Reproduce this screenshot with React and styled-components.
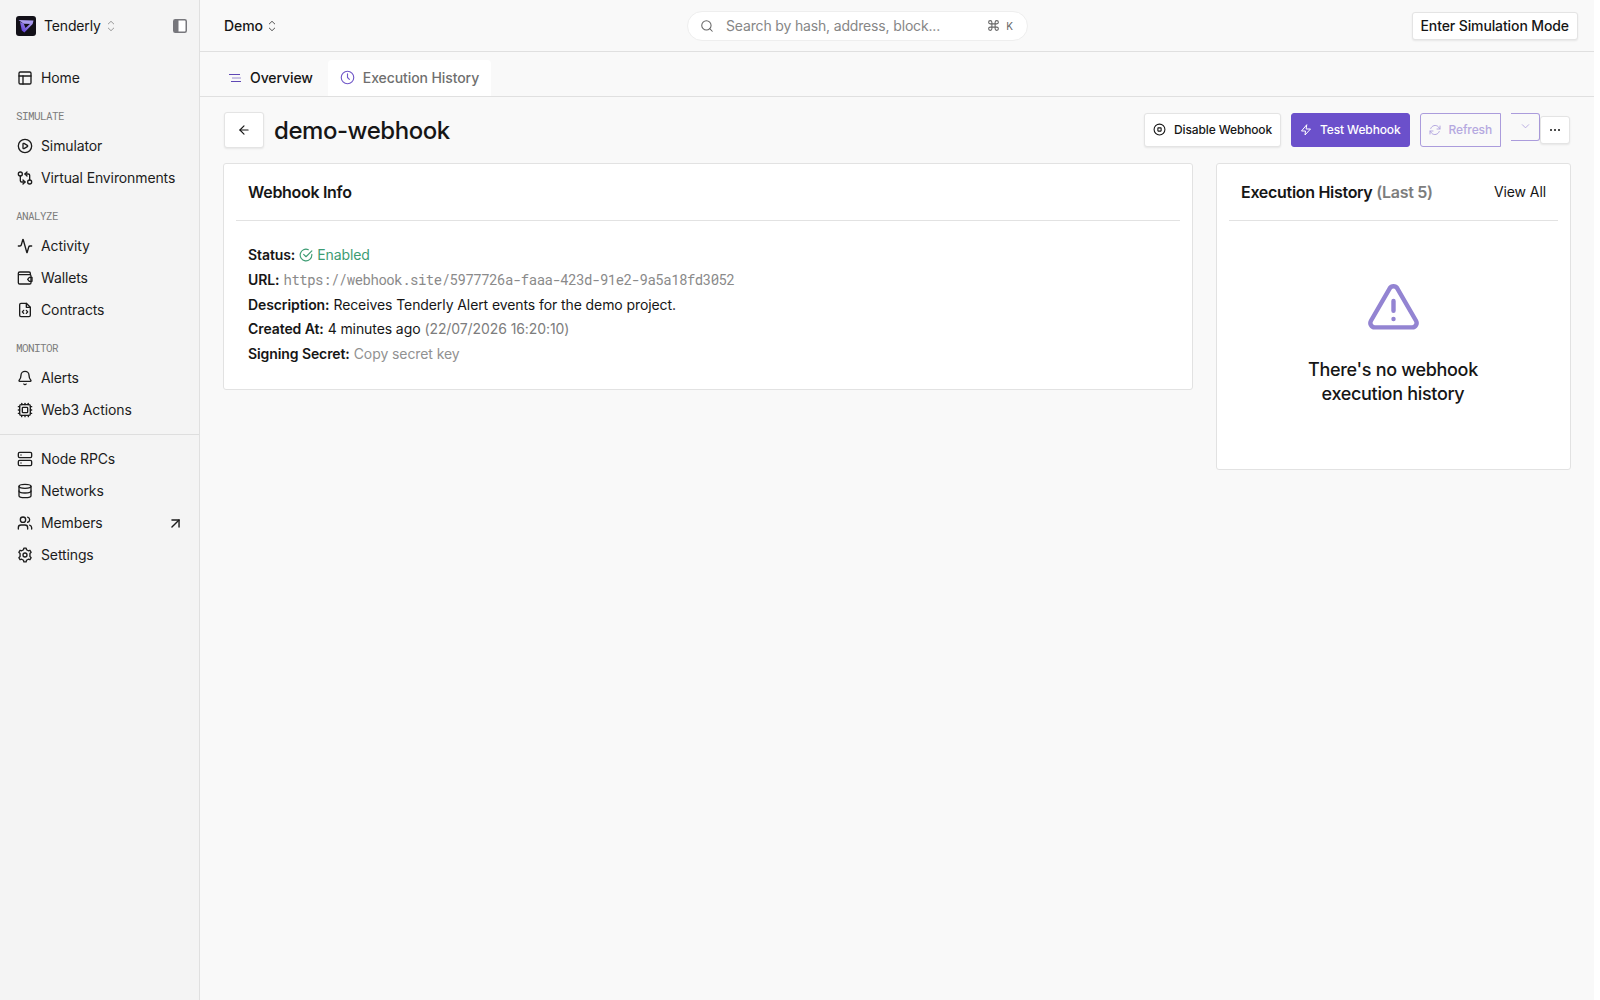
import React from "react";
import styled, { createGlobalStyle, css } from "styled-components";
import {
  Activity,
  ArrowLeft,
  ArrowUpRight,
  Bell,
  CirclePlay,
  Command,
  Cpu,
  Database,
  GitCompareArrows,
  PanelsTopLeft,
  Search,
  Server,
  Users,
} from "lucide-react";

const GlobalStyle = createGlobalStyle`
  * {
    box-sizing: border-box;
  }
  body {
    margin: 0;
    background: #fff;
    color: #161616;
    font-family: Inter, "Liberation Sans", sans-serif;
    font-size: 14px;
    letter-spacing: -0.09px;
  }
  button {
    font-family: inherit;
    color: inherit;
    cursor: pointer;
  }
  svg {
    display: block;
    flex-shrink: 0;
  }
`;

const Page = styled.div`
  display: flex;
  width: 1594px;
  height: 1000px;
  background: #f9f9f9;
`;

const Sidebar = styled.aside`
  width: 200px;
  background: #f4f4f4;
  border-right: 1px solid #e0e0e0;
`;

const Account = styled.div`
  display: flex;
  align-items: center;
  height: 52px;
  margin-bottom: 10px;
  padding: 0 12px 0 16px;
`;

const AccountName = styled.span`
  margin: 0 6px 0 8px;
  padding-bottom: 1px;
  letter-spacing: -0.15px;
`;

const PanelToggle = styled.div`
  margin-left: auto;
`;

const NavLabel = styled.div`
  height: 36px;
  padding: 15px 16px 0;
  font-family: "Roboto Mono", "Liberation Mono", monospace;
  font-size: 11px;
  line-height: 13px;
  letter-spacing: -0.6px;
  color: #7d7d7d;
`;

const NavItem = styled.a`
  display: flex;
  align-items: center;
  gap: 8px;
  height: 32px;
  padding: 0 15px 0 17px;
  color: #1c1c1c;
  letter-spacing: -0.12px;
`;

const NavText = styled.span`
  flex: 1;
  padding-bottom: 1px;
`;

const Divider = styled.div`
  margin: 8px 0;
  border-top: 1px solid #dedede;
`;

const Main = styled.main`
  flex: 1;
  min-width: 0;
`;

const TopBar = styled.header`
  display: grid;
  grid-template-columns: 463px 341px 1fr;
  align-items: center;
  height: 52px;
  padding: 0 16px 0 24px;
  border-bottom: 1px solid #e0e0e0;
`;

const Project = styled.div`
  display: flex;
  align-items: center;
  gap: 5px;
  font-weight: 500;
`;

const SearchBox = styled.div`
  display: flex;
  align-items: center;
  height: 30px;
  padding: 0 13px 0 12px;
  border: 1px solid #eeeeee;
  border-radius: 15px;
  background: #fff;
  color: #666;
`;

const Placeholder = styled.span`
  flex: 1;
  margin-left: 12px;
  color: #868686;
  letter-spacing: -0.16px;
`;

const Key = styled.span`
  margin-left: 6px;
  padding-right: 1px;
  font-size: 10px;
`;

const Button = styled.button`
  display: flex;
  align-items: center;
  gap: 8px;
  height: 34px;
  padding: 0 8px 1px;
  border: 1px solid #e4e4e4;
  border-radius: 3px;
  background: #fff;
  font-size: 12px;
  font-weight: 450;
  letter-spacing: -0.13px;
  white-space: nowrap;
  box-shadow: 0 1px 2px rgba(0, 0, 0, 0.08);
  ${({ $primary }) =>
    $primary &&
    css`
      border-color: #6b50cb;
      background: #6b50cb;
      color: #fff;
      box-shadow: none;
    `}
  ${({ $ghost }) =>
    $ghost &&
    css`
      border-color: #ab9cdc;
      border-radius: 3px 0 0 3px;
      background: transparent;
      color: #b5a8e0;
      box-shadow: none;
    `}
`;

const SimulationButton = styled(Button)`
  justify-self: end;
  height: 28px;
  padding-bottom: 0;
  font-size: 14px;
  font-weight: 500;
  letter-spacing: -0.11px;
`;

const BackButton = styled(Button)`
  justify-content: center;
  width: 40px;
  height: 36px;
  padding: 0;
`;

const RefreshMenu = styled(Button)`
  align-self: flex-start;
  justify-content: center;
  width: 29px;
  height: 28px;
  padding: 0 0 1px;
  border-left: 0;
  border-radius: 0 3px 3px 0;
`;

const MoreButton = styled(Button)`
  justify-content: center;
  width: 30px;
  height: 28px;
  padding: 0;
`;

const Tabs = styled.nav`
  display: flex;
  align-items: flex-end;
  gap: 3px;
  height: 45px;
  padding-left: 16px;
  border-bottom: 1px solid #e0e0e0;
`;

const Tab = styled.a`
  display: flex;
  align-items: center;
  gap: 8px;
  height: 36px;
  padding: 0 12px 1px;
  border-radius: 4px 4px 0 0;
  background: ${({ $raised }) => ($raised ? "#fff" : "transparent")};
  color: ${({ $raised }) => ($raised ? "#6f6f6f" : "#161616")};
  font-weight: 500;
`;

const Heading = styled.div`
  display: flex;
  align-items: center;
  height: 66px;
  padding: 0 24px;
`;

const Title = styled.h1`
  flex: 1;
  margin: 0 0 0 10px;
  font-size: 24px;
  font-weight: 450;
  letter-spacing: -0.45px;
`;

const Actions = styled.div`
  display: flex;
  align-items: center;
  gap: 10px;
`;

const MenuGroup = styled.div`
  display: flex;
  align-items: center;
  height: 34px;
`;

const Cards = styled.div`
  display: grid;
  grid-template-columns: 970px 355px;
  align-items: start;
  gap: 23px;
  padding-left: 23px;
`;

const Card = styled.section`
  height: ${({ $height }) => $height}px;
  padding: 0 12px;
  border: 1px solid #e2e2e2;
  border-radius: 3px;
  background: #fff;
`;

const CardHeader = styled.div`
  display: flex;
  align-items: center;
  justify-content: space-between;
  height: 57px;
  padding: 0 12px;
  border-bottom: 1px solid #e2e2e2;
`;

const CardTitle = styled.h2`
  margin: 0;
  font-size: 16px;
  font-weight: 600;
  letter-spacing: -0.3px;
`;

const ViewAll = styled.a`
  padding-bottom: 1px;
`;

const Muted = styled.span`
  color: ${({ $light }) => ($light ? "#919191" : "#7d7d7d")};
`;

const Details = styled.div`
  padding: 21.4px 12px;
`;

const Detail = styled.div`
  display: flex;
  align-items: center;
  gap: 4px;
  height: 24.7px;
`;

const Label = styled.span`
  font-weight: 600;
`;

const Status = styled.span`
  display: flex;
  align-items: center;
  gap: 4px;
  color: #3d9c73;
`;

const Url = styled.span`
  font-family: "Roboto Mono", "Liberation Mono", monospace;
  font-size: 14px;
  letter-spacing: -0.49px;
  color: #8a8a8a;
`;

const Empty = styled.div`
  display: flex;
  flex-direction: column;
  align-items: center;
  padding: 60px 1px 0 0;
`;

const EmptyText = styled.p`
  width: 190px;
  margin: 24px 0 0;
  font-size: 18px;
  font-weight: 450;
  letter-spacing: -0.32px;
  line-height: 24px;
  text-align: center;
`;

// Outline icon on a 24 unit grid, for the shapes lucide draws differently.
const Icon = ({ size = 16, stroke = 2, color = "currentColor", children }) => (
  <svg
    width={size}
    height={size}
    viewBox="0 0 24 24"
    fill="none"
    stroke={color}
    strokeWidth={stroke}
    strokeLinecap="round"
    strokeLinejoin="round"
  >
    {children}
  </svg>
);

const Wallet = (props) => (
  <Icon {...props}>
    <path d="M20 7V5a2 2 0 0 0-2-2H4a2 2 0 0 0-2 2v14a2 2 0 0 0 2 2h15a2 2 0 0 0 2-2V9a2 2 0 0 0-2-2H3" />
    <path d="M22.5 11H18.5l-2.5 3 2.5 3h4z" />
  </Icon>
);

const Contract = (props) => (
  <Icon {...props}>
    <path d="M14 2H6a2 2 0 0 0-2 2v16a2 2 0 0 0 2 2h12a2 2 0 0 0 2-2V8z" />
    <path d="M14 2v6h6M10 12.5l-2 2.3 2 2.3M14 12.5l2 2.3-2 2.3" />
  </Icon>
);

const Gear = (props) => (
  <Icon {...props}>
    <path d="M9.7 4.1 10.3 1.8h3.4l.6 2.3 2.7 1.6 2.4-.8 1.8 3-1.8 1.8v4.6l1.8 1.8-1.8 3-2.4-.8-2.7 1.6-.6 2.3h-3.4l-.6-2.3L7 18.3l-2.4.8-1.8-3 1.8-1.8V9.7L2.8 7.9l1.8-3 2.4.8z" />
    <circle cx="12" cy="12" r="3" />
  </Icon>
);

const Sort = ({ color }) => (
  <svg width="8" height="12" viewBox="0 0 8 12" fill="none" stroke={color}>
    <path d="M1 4.2 4 1.3l3 2.9M1 7.8l3 2.9 3-2.9" />
  </svg>
);

const Logo = () => (
  <svg width="20" height="20" viewBox="0 0 20 20">
    <defs>
      <linearGradient id="mark" x1="0" y1="1" x2="1" y2="0">
        <stop offset="0" stopColor="#5230d0" />
        <stop offset="1" stopColor="#b7a9f3" />
      </linearGradient>
    </defs>
    <rect width="20" height="20" rx="3" fill="#121018" />
    <path d="M2.5 4 17.5 4.6 16.6 8 7.7 7.8z" fill="#a99bee" />
    <path d="M4 6 7.7 7.6 9.5 12 14.5 7.4 16.6 8 8.4 16.5 5.8 14.6z" fill="url(#mark)" />
  </svg>
);

const sections = [
  { items: [["Home", PanelsTopLeft]] },
  {
    label: "SIMULATE",
    items: [
      ["Simulator", CirclePlay],
      ["Virtual Environments", GitCompareArrows],
    ],
  },
  {
    label: "ANALYZE",
    items: [
      ["Activity", Activity],
      ["Wallets", Wallet],
      ["Contracts", Contract],
    ],
  },
  {
    label: "MONITOR",
    items: [
      ["Alerts", Bell],
      ["Web3 Actions", Cpu],
    ],
  },
  {
    divider: true,
    items: [
      ["Node RPCs", Server],
      ["Networks", Database],
      ["Members", Users],
      ["Settings", Gear],
    ],
  },
];

const SideNav = () => (
  <Sidebar>
    <Account>
      <Logo />
      <AccountName>Tenderly</AccountName>
      <Sort color="#999" />
      <PanelToggle>
        <svg width="14" height="14" viewBox="0 0 14 14">
          <rect x=".75" y=".75" width="12.5" height="12.5" rx="1.5" fill="#fff" stroke="#77777c" strokeWidth="1.5" />
          <path d="M1 1h4.5v12H1z" fill="#77777c" />
        </svg>
      </PanelToggle>
    </Account>
    {sections.map(({ label, divider, items }, i) => (
      <div key={i}>
        {divider && <Divider />}
        {label && <NavLabel>{label}</NavLabel>}
        {items.map(([name, NavIcon]) => (
          <NavItem key={name}>
            <NavIcon size={16} />
            <NavText>{name}</NavText>
            {name === "Members" && <ArrowUpRight size={17} />}
          </NavItem>
        ))}
      </div>
    ))}
  </Sidebar>
);

const App = () => {
  return (
    <>
      <GlobalStyle />
      <Page>
        <SideNav />
        <Main>
          <TopBar>
            <Project>
              Demo <Sort color="#555" />
            </Project>
            <SearchBox>
              <Search size={14} strokeWidth={1.8} />
              <Placeholder>Search by hash, address, block...</Placeholder>
              <Command size={13} />
              <Key>K</Key>
            </SearchBox>
            <SimulationButton>Enter Simulation Mode</SimulationButton>
          </TopBar>
          <Tabs>
            <Tab>
              <svg width="14" height="14" viewBox="0 0 14 14" fill="none" stroke="#5f48b5">
                <path d="M1 3.5h11M3 10.5h10" />
                <path d="M4 7h9" opacity=".6" />
              </svg>
              Overview
            </Tab>
            <Tab $raised>
              <Icon size={15} stroke={1.8} color="#7158c8">
                <circle cx="12" cy="12" r="10" />
                <path d="M12 6v6l3 3" />
              </Icon>
              Execution History
            </Tab>
          </Tabs>
          <Heading>
            <BackButton>
              <ArrowLeft size={14} />
            </BackButton>
            <Title>demo-webhook</Title>
            <Actions>
              <Button>
                <Icon size={13}>
                  <circle cx="12" cy="12" r="10" />
                  <rect x="9" y="9" width="6" height="6" rx=".5" />
                </Icon>
                Disable Webhook
              </Button>
              <Button $primary>
                <Icon size={12}>
                  <path d="M13 2 3 14h8l-1 8 11-12h-8z" />
                </Icon>
                Test Webhook
              </Button>
              <Button $ghost>
                <Icon size={12}>
                  <path d="M22 4v6h-6M2 20v-6h6" />
                  <path d="M3.5 9a9 9 0 0 1 15-3.5L22 10M2 14l3.5 4.5a9 9 0 0 0 15-3.5" />
                </Icon>
                Refresh
              </Button>
              <MenuGroup>
                <RefreshMenu $ghost>
                  <Icon size={11}>
                    <path d="m5 8 7 7 7-7" />
                  </Icon>
                </RefreshMenu>
                <MoreButton>
                  <Icon size={12} stroke={4}>
                    <path d="M4 12h.01M12 12h.01M20 12h.01" />
                  </Icon>
                </MoreButton>
              </MenuGroup>
            </Actions>
          </Heading>
          <Cards>
            <Card $height={227}>
              <CardHeader>
                <CardTitle>Webhook Info</CardTitle>
              </CardHeader>
              <Details>
                <Detail>
                  <Label>Status:</Label>
                  <Status>
                    <Icon size={14}>
                      <path d="M22 11v1a10 10 0 1 1-6-9.1" />
                      <path d="m8 11 4 4L22 5" />
                    </Icon>
                    Enabled
                  </Status>
                </Detail>
                <Detail>
                  <Label>URL:</Label>
                  <Url>https://webhook.site/5977726a-faaa-423d-91e2-9a5a18fd3052</Url>
                </Detail>
                <Detail>
                  <Label>Description:</Label>
                  <span>Receives Tenderly Alert events for the demo project.</span>
                </Detail>
                <Detail>
                  <Label>Created At:</Label>
                  <span>4 minutes ago</span>
                  <Muted>(22/07/2026 16:20:10)</Muted>
                </Detail>
                <Detail>
                  <Label>Signing Secret:</Label>
                  <Muted $light>Copy secret key</Muted>
                </Detail>
              </Details>
            </Card>
            <Card $height={307}>
              <CardHeader>
                <CardTitle>
                  Execution History <Muted>(Last 5)</Muted>
                </CardTitle>
                <ViewAll>View All</ViewAll>
              </CardHeader>
              <Empty>
                <Icon size={53} stroke={2} color="#9384d2">
                  <path d="M10.3 3.3 1.8 18a2 2 0 0 0 1.7 3h17a2 2 0 0 0 1.7-3L13.7 3.3a2 2 0 0 0-3.4 0z" />
                  <path d="M12 9v4.5M12 17.2h.01" />
                </Icon>
                <EmptyText>There's no webhook execution history</EmptyText>
              </Empty>
            </Card>
          </Cards>
        </Main>
      </Page>
    </>
  );
};

export default App;
